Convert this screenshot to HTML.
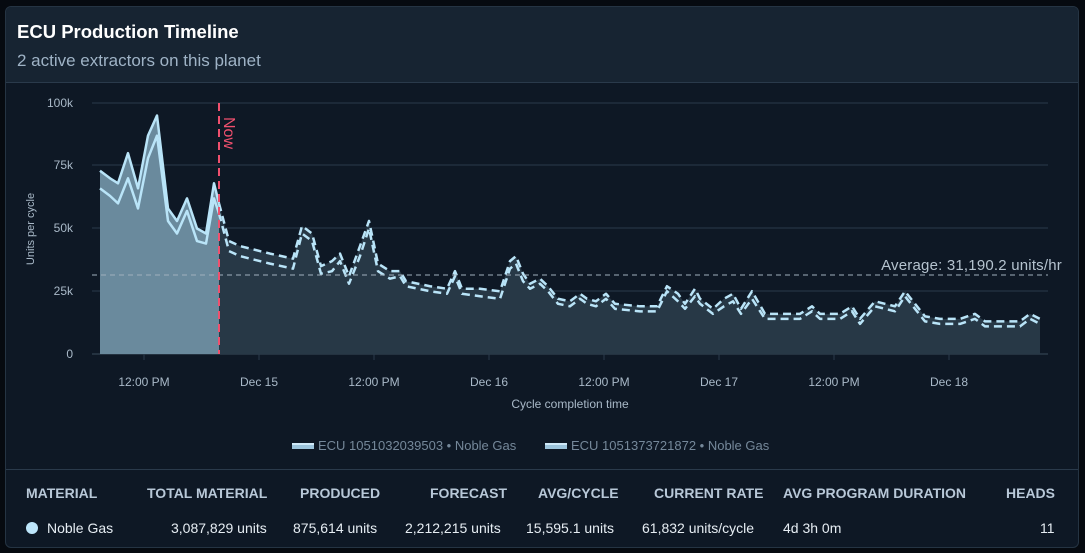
<!DOCTYPE html>
<html><head><meta charset="utf-8"><style>
*{margin:0;padding:0;box-sizing:border-box}
body{width:1085px;height:553px;background:#060a10;font-family:"Liberation Sans",sans-serif;overflow:hidden;position:relative}
.card{position:absolute;left:5px;top:6px;width:1074px;height:542px;background:#0e1825;border:1px solid #253443;border-radius:6px;overflow:hidden}
.hdr{height:76px;background:#172432;border-bottom:1px solid #2a3a4b;padding:14px 11px}
.hdr h1{font-size:18.5px;color:#fff;font-weight:bold}
.hdr p{font-size:17px;color:#9fb3c6;margin-top:8px}
svg{position:absolute;left:0;top:0}
.tbl{position:absolute;left:0;top:462px;width:1074px;border-top:1px solid #2a3a4b;height:80px}
.th,.td{position:absolute;font-size:14px;color:#c9d6e2}
.th{top:15px;color:#b8c8d8;font-weight:bold;font-size:14px}
.td{top:50px;color:#e6edf3}
</style></head><body>
<div class="card">
<div class="hdr"><h1>ECU Production Timeline</h1><p>2 active extractors on this planet</p></div>
<div class="tbl">
<div class="th" style="left:20px">MATERIAL</div>
<div class="th" style="left:141px">TOTAL MATERIAL</div>
<div class="th" style="left:294px">PRODUCED</div>
<div class="th" style="left:424px">FORECAST</div>
<div class="th" style="left:532px">AVG/CYCLE</div>
<div class="th" style="left:648px">CURRENT RATE</div>
<div class="th" style="left:777px">AVG PROGRAM DURATION</div>
<div class="th" style="left:1000px">HEADS</div>
<div class="td" style="left:20px"><span style="display:inline-block;width:12px;height:12px;border-radius:50%;background:#bde6fb;vertical-align:-1px;margin-right:9px"></span>Noble Gas</div>
<div class="td" style="left:165px">3,087,829 units</div>
<div class="td" style="left:287px">875,614 units</div>
<div class="td" style="left:399px">2,212,215 units</div>
<div class="td" style="left:520px">15,595.1 units</div>
<div class="td" style="left:636px">61,832 units/cycle</div>
<div class="td" style="left:777px">4d 3h 0m</div>
<div class="td" style="left:1034px">11</div>
</div>
</div>
<svg width="1085" height="553" font-family="Liberation Sans, sans-serif">
<g stroke="#2a3a4a" stroke-width="1">
<line x1="92" y1="103" x2="1048" y2="103"/><line x1="92" y1="165" x2="1048" y2="165"/><line x1="92" y1="228" x2="1048" y2="228"/><line x1="92" y1="291" x2="1048" y2="291"/><line x1="92" y1="354" x2="1048" y2="354" stroke="#3a4b5c"/>
<line x1="144" y1="354" x2="144" y2="360"/><line x1="259" y1="354" x2="259" y2="360"/><line x1="374" y1="354" x2="374" y2="360"/><line x1="489" y1="354" x2="489" y2="360"/><line x1="604" y1="354" x2="604" y2="360"/><line x1="719" y1="354" x2="719" y2="360"/><line x1="834" y1="354" x2="834" y2="360"/><line x1="949" y1="354" x2="949" y2="360"/>
</g>
<g fill="#a9b9c8" font-size="12" text-anchor="end">
<text x="73" y="107">100k</text><text x="73" y="169">75k</text><text x="73" y="232">50k</text><text x="73" y="295">25k</text><text x="73" y="358">0</text>
</g>
<g fill="#a9b9c8" font-size="12" text-anchor="middle">
<text x="144" y="386">12:00 PM</text><text x="259" y="386">Dec 15</text><text x="374" y="386">12:00 PM</text><text x="489" y="386">Dec 16</text><text x="604" y="386">12:00 PM</text><text x="719" y="386">Dec 17</text><text x="834" y="386">12:00 PM</text><text x="949" y="386">Dec 18</text>
<text x="570" y="408">Cycle completion time</text>
</g>
<text transform="translate(34,229) rotate(-90)" fill="#a9b9c8" font-size="11" text-anchor="middle">Units per cycle</text>
<g transform="translate(0,354) scale(1,-2.51)">
<path d="M100 0 L100 73 L110 70 L118 68 L128 80 L138 66 L148 87 L157 95 L168 58 L177 53 L187 62 L197 50 L206 48 L214 68 L219 60 L219 0Z" fill="#6a8a9d"/>
<path d="M219 0 L219 60 L229 45 L240 43 L270 40 L293 38 L302 51 L312 48 L321 35 L332 37 L340 40 L349 31 L360 43 L369 53 L378 36 L390 33 L400 33 L406 29 L430 27 L447 26 L455 33 L462 26 L480 26 L500 25 L510 37 L516 39 L523 32 L530 28 L540 30 L548 27 L558 22 L570 21 L580 24 L587 22 L596 21 L606 24 L615 20 L640 19 L657 19 L667 27 L678 24 L685 20 L695 26 L700 22 L713 18 L724 22 L733 24 L741 18 L752 25 L765 16 L800 16 L812 19 L820 16 L840 16 L852 19 L860 14 L875 21 L895 19 L905 25 L915 20 L925 15 L940 14 L960 14 L975 16 L985 13 L1000 13 L1020 13 L1030 16 L1040 14 L1040 0Z" fill="#273846"/>
<g fill="none" stroke="#b9e4f8" stroke-width="2.5" stroke-linejoin="round">
<path vector-effect="non-scaling-stroke" d="M100 73 L110 70 L118 68 L128 80 L138 66 L148 87 L157 95 L168 58 L177 53 L187 62 L197 50 L206 48 L214 68 L219 60"/>
<path vector-effect="non-scaling-stroke" d="M100 66 L110 63 L118 60 L128 70 L138 58 L148 78 L157 87 L168 53 L177 48 L187 57 L197 45 L206 44 L214 62 L219 56"/>
<path vector-effect="non-scaling-stroke" stroke-dasharray="8 5" d="M219 60 L229 45 L240 43 L270 40 L293 38 L302 51 L312 48 L321 35 L332 37 L340 40 L349 31 L360 43 L369 53 L378 36 L390 33 L400 33 L406 29 L430 27 L447 26 L455 33 L462 26 L480 26 L500 25 L510 37 L516 39 L523 32 L530 28 L540 30 L548 27 L558 22 L570 21 L580 24 L587 22 L596 21 L606 24 L615 20 L640 19 L657 19 L667 27 L678 24 L685 20 L695 26 L700 22 L713 18 L724 22 L733 24 L741 18 L752 25 L765 16 L800 16 L812 19 L820 16 L840 16 L852 19 L860 14 L875 21 L895 19 L905 25 L915 20 L925 15 L940 14 L960 14 L975 16 L985 13 L1000 13 L1020 13 L1030 16 L1040 14"/>
<path vector-effect="non-scaling-stroke" stroke-dasharray="8 5" d="M219 56 L229 41 L240 39 L270 36 L293 34 L302 48 L312 45 L321 32 L332 33 L340 37 L349 28 L360 39 L369 50 L378 33 L390 30 L400 31 L406 27 L430 25 L447 24 L455 31 L462 24 L480 23 L500 22 L510 34 L516 36 L523 29 L530 26 L540 28 L548 25 L558 20 L570 19 L580 22 L587 20 L596 19 L606 22 L615 18 L640 17 L657 17 L667 25 L678 21 L685 18 L695 23 L700 20 L713 16 L724 19 L733 21 L741 16 L752 22 L765 14 L800 14 L812 17 L820 14 L840 14 L852 17 L860 12 L875 19 L895 17 L905 23 L915 18 L925 13 L940 12 L960 12 L975 14 L985 11 L1000 11 L1020 11 L1030 14 L1040 12"/>
</g>
</g>
<line x1="92" y1="275" x2="1048" y2="275" stroke="#a0b0bd" stroke-width="1" stroke-dasharray="5 4"/>
<text x="1062" y="270" fill="#b5c3cf" font-size="15" letter-spacing="0.2" text-anchor="end">Average: 31,190.2 units/hr</text>
<line x1="219" y1="103" x2="219" y2="354" stroke="#f0506e" stroke-width="2" stroke-dasharray="8 5"/>
<text transform="translate(224,117) rotate(90)" fill="#f0506e" font-size="16">Now</text>
<rect x="292" y="443" width="22" height="6" fill="#9cc4dc"/><rect x="292" y="443" width="22" height="2" fill="#cfe9f8"/>
<text x="318" y="450" fill="#75889a" font-size="13">ECU 1051032039503 • Noble Gas</text>
<rect x="545" y="443" width="22" height="6" fill="#9cc4dc"/><rect x="545" y="443" width="22" height="2" fill="#cfe9f8"/>
<text x="571" y="450" fill="#75889a" font-size="13">ECU 1051373721872 • Noble Gas</text>
</svg>
</body></html>
